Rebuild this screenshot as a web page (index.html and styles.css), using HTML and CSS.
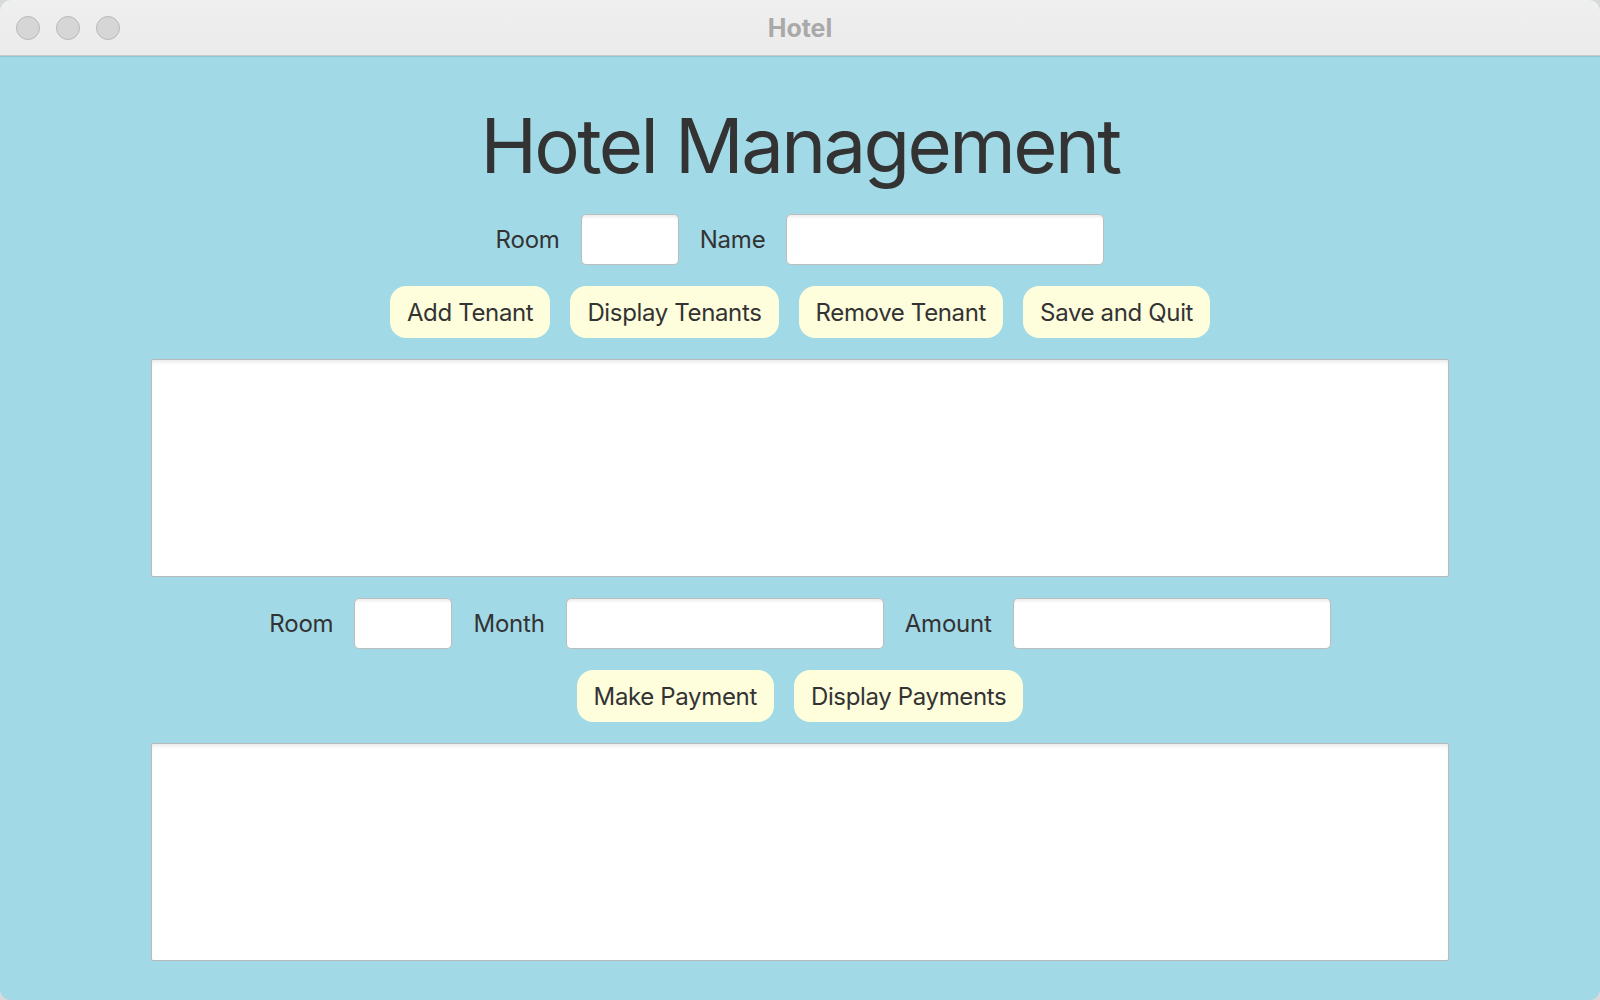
FILE: index.html
```html
<!DOCTYPE html>
<html lang="en">
<head>
<meta charset="utf-8">
<title>Hotel</title>
<link rel="stylesheet" href="styles.css">
</head>
<body>
<div class="window">
  <header class="titlebar">
    <div class="lights">
      <span class="light"></span>
      <span class="light"></span>
      <span class="light"></span>
    </div>
    <div class="title">Hotel</div>
  </header>
  <main class="content">
    <h1 class="heading">Hotel Management</h1>
    <div class="row">
      <label class="label">Room</label>
      <input class="field field-small" type="text">
      <label class="label">Name</label>
      <input class="field field-wide" type="text">
    </div>
    <div class="row buttons">
      <button class="btn">Add Tenant</button>
      <button class="btn">Display Tenants</button>
      <button class="btn">Remove Tenant</button>
      <button class="btn">Save and Quit</button>
    </div>
    <textarea class="area"></textarea>
    <div class="row">
      <label class="label">Room</label>
      <input class="field field-small" type="text">
      <label class="label">Month</label>
      <input class="field field-wide" type="text">
      <label class="label">Amount</label>
      <input class="field field-wide" type="text">
    </div>
    <div class="row buttons">
      <button class="btn">Make Payment</button>
      <button class="btn">Display Payments</button>
    </div>
    <textarea class="area"></textarea>
  </main>
</div>
</body>
</html>
```

FILE: styles.css
```css
* {
  box-sizing: border-box;
}

html, body {
  margin: 0;
  padding: 0;
  width: 1600px;
  height: 1000px;
  background: #d9d9d9;
  overflow: hidden;
}

.window {
  width: 1600px;
  height: 1000px;
  border-radius: 11px;
  overflow: hidden;
  display: flex;
  flex-direction: column;
  background: #a1d9e7;
  font-family: Inter, "Open Sans", "Liberation Sans", sans-serif;
  color: #333333;
}

.titlebar {
  height: 56px;
  flex: 0 0 56px;
  background: linear-gradient(#efefef, #ebebeb);
  border-bottom: 1px solid #c9c9c9;
  display: flex;
  align-items: center;
  position: relative;
}

.lights {
  display: flex;
  gap: 16px;
  padding-left: 16px;
}

.light {
  width: 24px;
  height: 24px;
  border-radius: 50%;
  background: #d6d6d6;
  border: 1px solid #b9b9b9;
}

.title {
  position: absolute;
  left: 0;
  right: 0;
  top: 0;
  bottom: 0;
  display: flex;
  align-items: center;
  justify-content: center;
  font-weight: 700;
  font-size: 25px;
  color: #a9a9a9;
}

.content {
  flex: 1;
  display: flex;
  flex-direction: column;
  align-items: center;
  gap: 21px;
  padding-top: 41px;
  box-shadow: inset 0 1px 0 #8cc6d5;
}

.heading {
  margin: 0;
  font-size: 76px;
  line-height: 96px;
  font-weight: 400;
  color: #333333;
  letter-spacing: -2.6px;
}

.row {
  display: flex;
  align-items: center;
  justify-content: center;
  gap: 21px;
}

.buttons {
  gap: 20px;
}

.label {
  font-size: 24px;
  color: #333333;
  letter-spacing: -0.2px;
}

.field {
  height: 51px;
  background: #ffffff;
  border: 1.5px solid #bdbdbd;
  border-radius: 5px;
  box-shadow: inset 0 3px 3px -1px rgba(0, 0, 0, 0.08);
  outline: none;
  font: inherit;
  margin: 0;
  padding: 0 8px;
}

.field-small {
  width: 98px;
}

.field-wide {
  width: 318px;
}

.btn {
  height: 52px;
  padding: 0 17px;
  border: none;
  border-radius: 16px;
  background: #fefedd;
  color: #333333;
  font-family: Inter, "Open Sans", "Liberation Sans", sans-serif;
  font-size: 24px;
  letter-spacing: -0.35px;
  margin: 0;
}

.area {
  width: 1298px;
  height: 218px;
  flex: 0 0 218px;
  background: #ffffff;
  border: 1.5px solid #bababa;
  border-radius: 2px;
  box-shadow: inset 0 4px 4px -2px rgba(0, 0, 0, 0.09);
  resize: none;
  outline: none;
  margin: 0;
  padding: 0;
}
```
